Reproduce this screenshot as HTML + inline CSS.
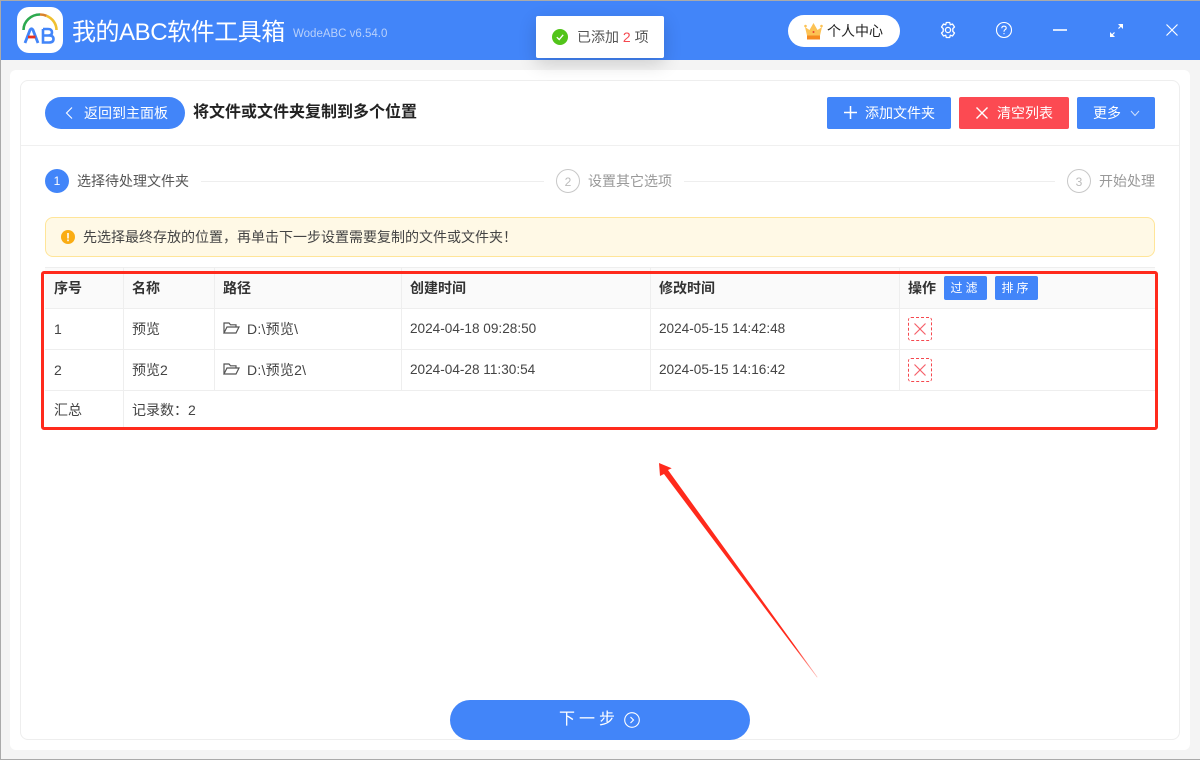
<!DOCTYPE html>
<html lang="zh-CN">
<head>
<meta charset="utf-8">
<title>我的ABC软件工具箱</title>
<style>
html,body{margin:0;padding:0}
body{width:1200px;height:760px;position:relative;overflow:hidden;background:#f4f4f4;font-family:"Liberation Sans","Noto Sans CJK SC",sans-serif;color:#333;font-size:14px}
div,span,svg{position:absolute;white-space:nowrap}
.t{line-height:20px}
.btn{background:#4285f9;color:#fff;border-radius:2px;height:33px;line-height:33px;font-size:14px}
.h{font-weight:700;color:#333;font-size:14px}
.vl{width:1px;background:#eee}
.hl{height:1px;background:#eee;left:45px;width:1110px}
.c{line-height:20px;color:#444;font-size:14px}
.d{font-size:13.6px}
.p{letter-spacing:.25px}
</style>
</head>
<body>
<!-- title bar -->
<div style="left:0;top:0;width:1200px;height:60px;background:#4285f9"></div>
<div style="left:0;top:0;width:1200px;height:1px;background:#aaa"></div>
<div style="left:0;top:0;width:1px;height:760px;background:#aaa"></div>
<div style="left:0;top:759px;width:1200px;height:1px;background:#aaa"></div>
<!-- logo -->
<div style="left:17px;top:7px;width:46px;height:46px;border-radius:12px;background:#fff"></div>
<svg style="left:17px;top:7px" width="46" height="46" viewBox="0 0 46 46" fill="none">
<path d="M6.500 23 A16.500 15.500 0 0 1 23 7.500" stroke="#2da94f" stroke-width="2.600"/>
<path d="M23 7.500 A16.500 15.500 0 0 1 29.500 8.800" stroke="#d9822b" stroke-width="2.600"/>
<path d="M29.500 8.800 A16.500 15.500 0 0 1 39.500 23" stroke="#f0c030" stroke-width="2.600"/>
<path d="M8 36 L13 23 Q14.500 20.500 16 23 L21 36" stroke="#4285f9" stroke-width="2.800"/>
<path d="M11 30 H18.500" stroke="#e8321f" stroke-width="2.800"/>
<path d="M26 22 H31 Q35 22 35 25.500 Q35 28.500 31 28.500 H26 M26 28.500 H32 Q36.500 28.500 36.500 32 Q36.500 35.500 32 35.500 H26 Z M26 22 V35.500" stroke="#4285f9" stroke-width="2.600"/>
</svg>
<div style="left:72px;top:16px;line-height:34px;font-size:24px;letter-spacing:-.45px;color:#fff">我的ABC软件工具箱</div>
<div style="left:293px;top:24px;line-height:20px;font-size:11.500px;color:#b9d1fb">WodeABC v6.54.0</div>

<!-- panels -->
<div style="left:10px;top:70px;width:1180px;height:680px;background:#fff;border-radius:6px"></div>
<div style="left:20px;top:80px;width:1158px;height:658px;border:1px solid #eee;border-radius:8px;background:#fff"></div>
<div style="left:21px;top:145px;width:1158px;height:1px;background:#f0f0f0"></div>

<!-- toast -->
<div style="left:536px;top:16px;width:128px;height:42px;background:#fff;border-radius:2px;box-shadow:0 6px 18px rgba(0,0,0,.16)"></div>
<svg style="left:552px;top:29px" width="16" height="16" viewBox="0 0 16 16"><circle cx="8" cy="8" r="8" fill="#52c41a"/><path d="M4.800 8.200 L7.200 10.500 L11.200 5.800" stroke="#fff" stroke-width="1.300" fill="none"/></svg>
<div class="t" style="left:577px;top:27px;font-size:14px;color:#555">已添加 <span style="position:static;color:#f5484f">2</span> 项</div>

<!-- personal center -->
<div style="left:788px;top:15px;width:112px;height:32px;background:#fff;border-radius:16px"></div>
<svg style="left:804px;top:22px" width="19" height="18" viewBox="0 0 19 18"><path d="M1 5 L5.500 8 L9.500 1 L13.500 8 L18 5 L16 13.500 H3 Z" fill="#fcc254"/><rect x="3" y="13.500" width="13" height="4" fill="#f58a1f"/><circle cx="9.500" cy="10" r="1" fill="#e8432f"/><circle cx="1.500" cy="4" r="1.300" fill="#fcc254"/><circle cx="17.500" cy="4" r="1.300" fill="#fcc254"/></svg>
<div class="t" style="left:827px;top:21px;font-size:14px;color:#222">个人中心</div>

<!-- window icons -->
<svg style="left:939px;top:21px" width="18" height="18" viewBox="0 0 18 18" fill="none" stroke="#fff" stroke-width="1.300"><path d="M7.300 1.500 H10.700 L11.300 3.800 L13.500 3 L15.500 6 L13.800 7.600 V10.400 L15.500 12 L13.500 15 L11.300 14.200 L10.700 16.500 H7.300 L6.700 14.200 L4.500 15 L2.500 12 L4.200 10.400 V7.600 L2.500 6 L4.500 3 L6.700 3.800 Z" stroke-linejoin="round"/><circle cx="9" cy="9" r="2.600"/></svg>
<svg style="left:996px;top:22px" width="16" height="16" viewBox="0 0 16 16" fill="none" stroke="#fff" stroke-width="1.100"><circle cx="8" cy="8" r="7.500"/><path d="M5.800 6.300 Q5.800 4.200 8 4.200 Q10.200 4.200 10.200 6 Q10.200 7.200 8.800 7.900 Q8 8.300 8 9.700"/><path d="M8 11 V12.200"/></svg>
<div style="left:1053px;top:29px;width:14px;height:2px;background:#d9e6fe"></div>
<svg style="left:1109px;top:23px" width="15" height="15" viewBox="0 0 15 15"><path d="M9 1 H14 V6 L12.300 4.300 L10.700 2.700 Z M1 14 V9 L2.700 10.700 L4.300 12.300 L6 14 Z" fill="#fff"/><path d="M12 3 L9.500 5.500 M3 12 L5.500 9.500" stroke="#fff" stroke-width="1.200"/></svg>
<svg style="left:1166px;top:24px" width="12" height="12" viewBox="0 0 12 12" stroke="#fff" stroke-width="1.200"><path d="M.5 .5 L11.500 11.500 M11.500 .5 L.5 11.500"/></svg>

<!-- toolbar -->
<div style="left:45px;top:97px;width:140px;height:32px;background:#4285f9;border-radius:16px"></div>
<svg style="left:64px;top:106px" width="10" height="14" viewBox="0 0 10 14" fill="none" stroke="#fff" stroke-width="1.100"><path d="M8 1.500 L2.500 7 L8 12.500"/></svg>
<div class="t" style="left:84px;top:103px;font-size:14px;color:#fff">返回到主面板</div>
<div style="left:193px;top:101px;line-height:24px;font-size:16px;font-weight:700;color:#222">将文件或文件夹复制到多个位置</div>

<div class="btn" style="left:827px;top:97px;width:124px;height:32px"></div>
<svg style="left:844px;top:106px" width="13" height="13" viewBox="0 0 13 13" stroke="#fff" stroke-width="1.500"><path d="M6.500 0 V13 M0 6.500 H13"/></svg>
<div class="t" style="left:865px;top:103px;font-size:14px;color:#fff">添加文件夹</div>
<div class="btn" style="left:959px;top:97px;width:110px;height:32px;background:#fc4a52"></div>
<svg style="left:976px;top:107px" width="12" height="12" viewBox="0 0 12 12" stroke="#fff" stroke-width="1.400"><path d="M.5 .5 L11.500 11.500 M11.500 .5 L.5 11.500"/></svg>
<div class="t" style="left:997px;top:103px;font-size:14px;color:#fff">清空列表</div>
<div class="btn" style="left:1077px;top:97px;width:78px;height:32px"></div>
<div class="t" style="left:1093px;top:103px;font-size:14px;color:#fff">更多</div>
<svg style="left:1130px;top:110px" width="10" height="7" viewBox="0 0 10 7" fill="none" stroke="#cfe0fd" stroke-width="1"><path d="M1 1 L5 5.500 L9 1"/></svg>

<!-- steps -->
<div style="left:45px;top:169px;width:24px;height:24px;border-radius:50%;background:#4285f9;color:#fff;text-align:center;line-height:25px;font-size:12px">1</div>
<div class="t" style="left:77px;top:171px;font-size:14px;color:#555">选择待处理文件夹</div>
<div style="left:201px;top:181px;width:343px;height:1px;background:#eee"></div>
<div style="left:556px;top:169px;width:22px;height:22px;border:1px solid #c8c8c8;border-radius:50%;color:#bbb;text-align:center;line-height:24px;font-size:12px">2</div>
<div class="t" style="left:588px;top:171px;font-size:14px;color:#999">设置其它选项</div>
<div style="left:684px;top:181px;width:371px;height:1px;background:#eee"></div>
<div style="left:1067px;top:169px;width:22px;height:22px;border:1px solid #c8c8c8;border-radius:50%;color:#bbb;text-align:center;line-height:24px;font-size:12px">3</div>
<div class="t" style="left:1099px;top:171px;font-size:14px;color:#999">开始处理</div>

<!-- notice -->
<div style="left:45px;top:217px;width:1108px;height:38px;background:#fff9e6;border:1px solid #ffe599;border-radius:8px"></div>
<svg style="left:61px;top:230px" width="14" height="14" viewBox="0 0 14 14"><circle cx="7" cy="7" r="7" fill="#faad14"/><rect x="6.200" y="3" width="1.600" height="5.500" fill="#fff"/><rect x="6.200" y="9.500" width="1.600" height="1.700" fill="#fff"/></svg>
<div class="t" style="left:83px;top:227px;font-size:14px;color:#444">先选择最终存放的位置，再单击下一步设置需要复制的文件或文件夹！</div>

<!-- table -->
<div style="left:45px;top:268px;width:1110px;height:40px;background:#fafafa"></div>
<div class="hl" style="top:267px"></div>
<div class="hl" style="top:308px"></div>
<div class="hl" style="top:349px"></div>
<div class="hl" style="top:390px"></div>
<div class="vl" style="left:123px;top:268px;height:160px"></div>
<div class="vl" style="left:214px;top:268px;height:122px"></div>
<div class="vl" style="left:401px;top:268px;height:122px"></div>
<div class="vl" style="left:650px;top:268px;height:122px"></div>
<div class="vl" style="left:899px;top:268px;height:122px"></div>

<div class="t h" style="left:54px;top:278px">序号</div>
<div class="t h" style="left:132px;top:278px">名称</div>
<div class="t h" style="left:223px;top:278px">路径</div>
<div class="t h" style="left:410px;top:278px">创建时间</div>
<div class="t h" style="left:659px;top:278px">修改时间</div>
<div class="t h" style="left:908px;top:278px">操作</div>
<div style="left:944px;top:276px;width:43px;height:24px;background:#4285f9;border-radius:2px;color:#fff;text-align:center;line-height:24px;font-size:12px;letter-spacing:3px">过滤</div>
<div style="left:995px;top:276px;width:43px;height:24px;background:#4285f9;border-radius:2px;color:#fff;text-align:center;line-height:24px;font-size:12px;letter-spacing:3px">排序</div>

<div class="c" style="left:54px;top:319px">1</div>
<div class="c" style="left:132px;top:319px">预览</div>
<svg style="left:223px;top:321px" width="17" height="14" viewBox="0 0 17 14" fill="none" stroke="#555" stroke-width="1.200"><path d="M1 12 V2 H6 L7.500 3.800 H13 V6"/><path d="M1 12 L4 6 H16 L13 12 Z"/></svg>
<div class="c p" style="left:247px;top:319px">D:\预览\</div>
<div class="c d" style="left:410px;top:319px">2024-04-18 09:28:50</div>
<div class="c d" style="left:659px;top:319px">2024-05-15 14:42:48</div>
<div style="left:908px;top:317px;width:22px;height:22px;border:1px dashed #f5484f;border-radius:3px"></div>
<svg style="left:914px;top:323px" width="12" height="12" viewBox="0 0 12 12" stroke="#f5606a" stroke-width="1.200"><path d="M.5 .5 L11.500 11.500 M11.500 .5 L.5 11.500"/></svg>

<div class="c" style="left:54px;top:360px">2</div>
<div class="c" style="left:132px;top:360px">预览2</div>
<svg style="left:223px;top:362px" width="17" height="14" viewBox="0 0 17 14" fill="none" stroke="#555" stroke-width="1.200"><path d="M1 12 V2 H6 L7.500 3.800 H13 V6"/><path d="M1 12 L4 6 H16 L13 12 Z"/></svg>
<div class="c p" style="left:247px;top:360px">D:\预览2\</div>
<div class="c d" style="left:410px;top:360px">2024-04-28 11:30:54</div>
<div class="c d" style="left:659px;top:360px">2024-05-15 14:16:42</div>
<div style="left:908px;top:358px;width:22px;height:22px;border:1px dashed #f5484f;border-radius:3px"></div>
<svg style="left:914px;top:364px" width="12" height="12" viewBox="0 0 12 12" stroke="#f5606a" stroke-width="1.200"><path d="M.5 .5 L11.500 11.500 M11.500 .5 L.5 11.500"/></svg>

<div class="c" style="left:54px;top:400px">汇总</div>
<div class="c" style="left:132px;top:400px">记录数：2</div>

<!-- red annotation -->
<div style="left:41px;top:271px;width:1111px;height:153px;border:3px solid #ff2a1c;border-radius:3px"></div>
<svg style="left:640px;top:450px" width="190" height="240" viewBox="0 0 190 240"><defs><linearGradient id="g" gradientUnits="userSpaceOnUse" x1="155" y1="196" x2="177" y2="227"><stop offset="0" stop-color="#ff2a1c"/><stop offset="1" stop-color="#ff2a1c" stop-opacity=".3"/></linearGradient></defs><path d="M19 13 L31.700 18.300 L28 20 L177.500 227 L177 227.500 L24 24 L20 26 Z" fill="url(#g)"/></svg>

<!-- next -->
<div style="left:450px;top:700px;width:300px;height:40px;background:#4285f9;border-radius:20px"></div>
<div style="left:559px;top:709px;line-height:22px;font-size:16px;color:#fff;letter-spacing:4px">下一步</div>
<svg style="left:624px;top:712px" width="16" height="16" viewBox="0 0 16 16" fill="none" stroke="#fff" stroke-width="1.100"><circle cx="8" cy="8" r="7.300"/><path d="M6.500 5 L9.500 8 L6.500 11"/></svg>
</body>
</html>
